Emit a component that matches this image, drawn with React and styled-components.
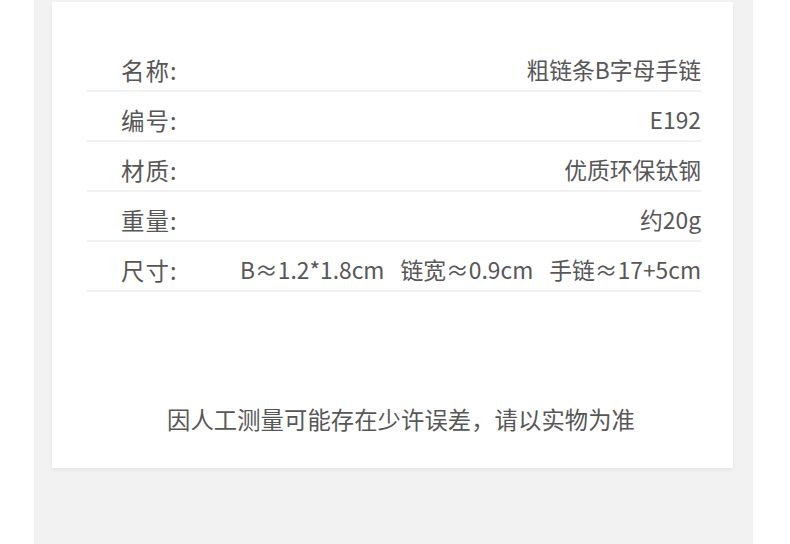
import React from "react";
import styled, { createGlobalStyle } from "styled-components";

const GlobalStyle = createGlobalStyle`
  body {
    margin: 0;
    background: #ffffff;
    font-family: "Noto Sans CJK SC", "Noto Sans", sans-serif;
  }
`;

const Column = styled.div`
  margin-left: 34px;
  width: 719px;
  min-height: 544px;
  background: #f2f2f2;
  padding: 2px 20px 0 18px;
  box-sizing: border-box;
`;

const Card = styled.div`
  background: #ffffff;
  height: 466px;
  padding: 40px 32px 0 35px;
  box-sizing: border-box;
  box-shadow: 0 2px 4px rgba(0, 0, 0, 0.06);
  display: flex;
  flex-direction: column;
`;

const Row = styled.div`
  display: flex;
  align-items: center;
  justify-content: space-between;
  height: 50px;
  padding: 13px 0 5px 34px;
  box-sizing: border-box;
  border-bottom: 2px solid #f1f1f1;
  font-size: 23.5px;
  line-height: 30px;
  color: #575757;
`;

const Label = styled.span`
  white-space: nowrap;
  letter-spacing: 1px;
`;

const Value = styled.span`
  display: flex;
  gap: ${(p) => p.$gap || 0}px;
  font-size: 22.8px;
  white-space: nowrap;
`;

const Note = styled.div`
  margin-top: 112px;
  text-align: center;
  font-size: 23.3px;
  letter-spacing: 0.1px;
  line-height: 30px;
  color: #575757;
  padding-left: 14px;
`;

const rows = [
  ["名称:", ["粗链条B字母手链"]],
  ["编号:", ["E192"]],
  ["材质:", ["优质环保钛钢"]],
  ["重量:", ["约20g"]],
  ["尺寸:", ["B≈1.2*1.8cm", "链宽≈0.9cm", "手链≈17+5cm"]],
];

const App = () => {
  return (
    <>
      <GlobalStyle />
      <Column>
        <Card>
          {rows.map(([label, parts]) => (
            <Row key={label}>
              <Label>{label}</Label>
              <Value $gap={16}>
                {parts.map((p) => (
                  <span key={p}>{p}</span>
                ))}
              </Value>
            </Row>
          ))}
          <Note>因人工测量可能存在少许误差，请以实物为准</Note>
        </Card>
      </Column>
    </>
  );
};

export default App;
